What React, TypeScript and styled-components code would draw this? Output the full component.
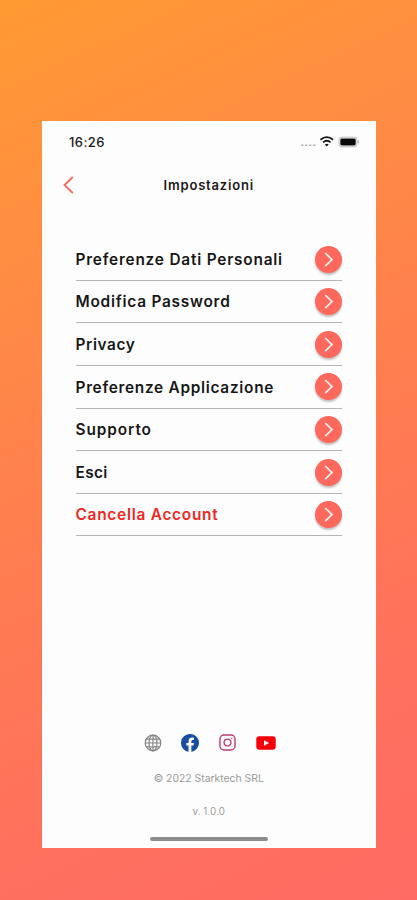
import React from "react";
import styled, { createGlobalStyle } from "styled-components";

const GlobalStyle = createGlobalStyle`
  * { box-sizing: border-box; }
  body { margin: 0; font-family: Inter, "Open Sans", sans-serif; }
`;

const Backdrop = styled.main`
  width: 417px;
  height: 900px;
  padding: 120.6px 41.5px 51.6px 42px;
  background: linear-gradient(155deg, #ff9a32 0%, #ff8d42 24%, #ff7d50 52%, #ff705e 80%, #ff6b62 100%);
`;

const Screen = styled.section`
  height: 727.8px;
  display: flex;
  flex-direction: column;
  background: #fdfdfd;
`;

const StatusBar = styled.header`
  height: 42px;
  padding: 0 16.5px 0 27px;
  display: flex;
  align-items: center;
  justify-content: space-between;
`;

const Clock = styled.time`
  font-size: 13px;
  font-weight: 500;
  line-height: 16px;
  letter-spacing: 0.4px;
  color: #171717;
`;

const StatusIcons = styled.div`
  display: flex;
  align-items: center;
`;

const TitleBar = styled.div`
  height: 44.5px;
  padding: 0 20px;
  display: grid;
  grid-template-columns: 24px 1fr 24px;
  align-items: center;
  svg { display: block; }
`;

const Title = styled.h1`
  margin: 0;
  text-align: center;
  font-size: 13px;
  font-weight: 600;
  line-height: 18px;
  letter-spacing: 0.82px;
  color: #191919;
`;

const Menu = styled.nav`
  margin: 31.2px 33.5px 0 33.5px;
`;

const MenuRow = styled.div`
  height: 42.6px;
  display: flex;
  align-items: center;
  justify-content: space-between;
  border-bottom: 1px solid #b5b5b5;
`;

const Label = styled.span<{ $danger?: boolean; $tracking: number }>`
  padding-top: 1.4px;
  font-size: 15.4px;
  font-weight: 600;
  line-height: 20px;
  white-space: nowrap;
  letter-spacing: ${(p) => p.$tracking}px;
  color: ${(p) => (p.$danger ? "#f02622" : "#171717")};
`;

const RoundButton = styled.span`
  width: 27px;
  height: 27px;
  display: grid;
  place-items: center;
  border-radius: 50%;
  background: #ff685c;
  box-shadow: 0 2px 2px rgba(70, 50, 50, 0.3);
`;

const Footer = styled.footer`
  margin-top: auto;
  display: flex;
  flex-direction: column;
  align-items: center;
`;

const Socials = styled.div`
  height: 20px;
  display: flex;
  align-items: center;
  margin-left: 2px;
  svg { display: block; }
`;

const SocialSlot = styled.span<{ $width: number }>`
  width: ${(p) => p.$width}px;
  display: flex;
  justify-content: center;
`;

const FinePrint = styled.p<{ $top: number; $size: number; $tracking: number }>`
  margin: ${(p) => p.$top}px 0 0;
  font-size: ${(p) => p.$size}px;
  line-height: 14px;
  letter-spacing: ${(p) => p.$tracking}px;
  color: #9b9b9b;
`;

const HomeIndicator = styled.div`
  width: 118px;
  height: 4px;
  margin: 18px 0 7.5px;
  border-radius: 2px;
  background: #8c8c8c;
`;

const items = [
  { label: "Preferenze Dati Personali", tracking: 0.79 },
  { label: "Modifica Password", tracking: 0.76 },
  { label: "Privacy", tracking: 0.6 },
  { label: "Preferenze Applicazione", tracking: 0.71 },
  { label: "Supporto", tracking: 0.92 },
  { label: "Esci", tracking: 0.35 },
  { label: "Cancella Account", tracking: 0.75, danger: true },
];

const StatusGlyphs = () => (
  <svg width="60" height="16" viewBox="0 0 60 16" fill="none">
    <g fill="#aaa">
      <rect x="2" y="10.4" width="2.5" height="1.6" rx=".8" />
      <rect x="6" y="10.4" width="2.5" height="1.6" rx=".8" />
      <rect x="10" y="10.4" width="2.5" height="1.6" rx=".8" />
      <rect x="14" y="10.4" width="2.5" height="1.6" rx=".8" />
    </g>
    <g stroke="#171717" strokeWidth="1.8">
      <path d="M21.5 5.8Q27.8.5 34.1 5.8" />
      <path d="M24 8.4Q27.8 5.2 31.6 8.4" />
    </g>
    <path d="M25.9 10.4Q27.8 8.9 29.7 10.4L27.8 12.5Z" fill="#111" />
    <rect x="40" y="3.2" width="18" height="9.6" rx="2.7" stroke="#bbb" />
    <rect x="41.3" y="4.5" width="15.4" height="7" rx="1.4" fill="#090909" />
    <path d="M59.3 6.5v3" stroke="#aaa" />
  </svg>
);

const BackArrow = () => (
  <svg width="14" height="20" viewBox="0 0 14 20" fill="none">
    <path d="M10.8 2 2.4 10l8.4 8" stroke="#f7685e" strokeWidth="1.8" />
  </svg>
);

const Chevron = () => (
  <svg width="13" height="17" viewBox="0 0 13 17" fill="none">
    <path d="m3.2 2 6.8 6.6-6.8 6.5" stroke="#fff5f0" strokeWidth="1.7" />
  </svg>
);

const Globe = () => (
  <svg width="18" height="18" viewBox="0 0 18 18" fill="none" stroke="#858585" strokeWidth="1.2">
    <circle cx="9" cy="9" r="7.8" />
    <ellipse cx="9" cy="9" rx="4" ry="7.8" />
    <path d="M9 1v16M1 9h16M2.3 5.2h13.4M2.3 12.8h13.4" />
  </svg>
);

const Facebook = () => (
  <svg width="18" height="18" viewBox="0 0 24 24">
    <path
      fill="#194da0"
      d="M24 12A12 12 0 1 0 10.1 23.8v-8.4h-3V12h3V9.4c0-3 1.8-4.7 4.6-4.7 1.3 0 2.6.2 2.6.2v3h-1.5c-1.5 0-2 .9-2 1.9V12h3.4l-.6 3.4h-2.8v8.4A12 12 0 0 0 24 12Z"
    />
  </svg>
);

const Instagram = () => (
  <svg width="17" height="17" viewBox="0 0 17 17" fill="none" stroke="#bd3b73" strokeWidth="1.4">
    <rect x="1" y="1" width="15" height="15" rx="4" />
    <circle cx="8.5" cy="8.5" r="3.4" />
    <circle cx="12.7" cy="4.2" r=".7" fill="#bd3b73" stroke="none" />
  </svg>
);

const Youtube = () => (
  <svg width="20" height="14" viewBox="0 0 20 14">
    <rect x=".3" y=".3" width="19.4" height="13.4" rx="3" fill="#f50008" />
    <path d="m8 4.2 5.1 2.8L8 9.8Z" fill="#fff" />
  </svg>
);

export default function App() {
  return (
    <>
      <GlobalStyle />
      <Backdrop>
        <Screen>
          <StatusBar>
            <Clock>16:26</Clock>
            <StatusIcons><StatusGlyphs /></StatusIcons>
          </StatusBar>
          <TitleBar>
            <BackArrow />
            <Title>Impostazioni</Title>
          </TitleBar>
          <Menu>
            {items.map((item) => (
              <MenuRow key={item.label}>
                <Label $danger={item.danger} $tracking={item.tracking}>{item.label}</Label>
                <RoundButton><Chevron /></RoundButton>
              </MenuRow>
            ))}
          </Menu>
          <Footer>
            <Socials>
              <SocialSlot $width={38}><Globe /></SocialSlot>
              <SocialSlot $width={37}><Facebook /></SocialSlot>
              <SocialSlot $width={37}><Instagram /></SocialSlot>
              <SocialSlot $width={40}><Youtube /></SocialSlot>
            </Socials>
            <FinePrint $top={19} $size={10.4} $tracking={0}>© 2022 Starktech SRL</FinePrint>
            <FinePrint $top={19} $size={9.8} $tracking={0.1}>v. 1.0.0</FinePrint>
            <HomeIndicator />
          </Footer>
        </Screen>
      </Backdrop>
    </>
  );
}
